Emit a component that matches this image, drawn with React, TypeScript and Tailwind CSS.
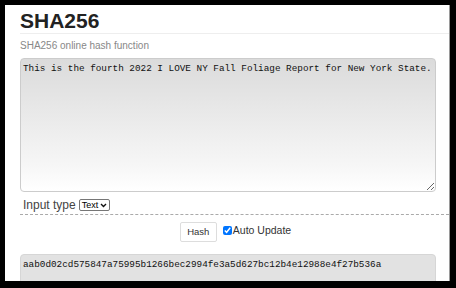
export default function App() {
  const input =
    "This is the fourth 2022 I LOVE NY Fall Foliage Report for New York State.";
  const hash =
    "aab0d02cd575847a75995b1266bec2994fe3a5d627bc12b4e12988e4f27b536a";

  return (
    <div className="w-[456px] h-[288px] bg-black pt-[5px] pl-[5px] pr-[6px] pb-[7px] font-['Liberation_Sans',Arial,sans-serif]">
      <div className="h-full bg-white border-r border-[#9a9a9a] overflow-hidden pl-[15px]">
        {/* Title */}
        <h1 className="mt-[4px] h-[25px] border-b border-[#eeeeee] text-[21px] leading-[24px] font-bold text-[#222]">
          SHA256
        </h1>
        <p className="mt-[6px] text-[10px] leading-[12px] text-[#888]">
          SHA256 online hash function
        </p>

        {/* Input */}
        <div className="mt-[6px] w-[416px] h-[134px] rounded-[4px] border border-[#cccccc] bg-[linear-gradient(to_bottom,#dbdbdb_0%,#f6f6f6_80%,#ffffff_100%)] overflow-hidden">
          <textarea
            readOnly
            value={input}
            className="block w-full h-full bg-transparent px-[2px] pt-[4px] font-['Liberation_Mono',monospace] text-[9.33px] leading-[12px] text-[#111] outline-none resize-y"
          />
        </div>

        <div className="mt-[7px] h-[12px] flex items-center pl-[3px] gap-[3px]">
          <span className="text-[12px] leading-[12px] text-[#444]">Input type</span>
          <div className="h-[12px] flex items-center gap-[2px] border border-[#767676] rounded-[2px] pl-[2px] pr-[2px]">
            <span className="text-[9px] leading-[10px] text-black">Text</span>
            <svg width="7" height="5" viewBox="0 0 7 5">
              <path d="M1 1 L3.5 3.5 L6 1" fill="none" stroke="#111" strokeWidth="1.4" />
            </svg>
          </div>
        </div>

        <div className="mt-[3px] border-t border-dashed border-[#aaaaaa]" />

        {/* Controls */}
        <div className="mt-[7px] flex items-center justify-center gap-[6px] pl-[2px]">
          <button className="w-[37px] h-[20px] border border-[#dddddd] rounded-[2px] bg-white text-[9.5px] text-[#333]">
            Hash
          </button>
          <label className="flex items-center gap-[1px] text-[10.5px] leading-[12px] text-[#333] -mt-[4px]">
            <input type="checkbox" defaultChecked className="w-[9px] h-[9px] m-0" />
            Auto Update
          </label>
        </div>

        {/* Output */}
        <div className="mt-[12px] w-[416px] h-[60px] rounded-[4px] border border-[#d6d6d6] bg-[#e2e2e2] px-[2px] pt-[4px] font-['Liberation_Mono',monospace] text-[9.33px] leading-[12px] text-[#111]">
          {hash}
        </div>
      </div>
    </div>
  );
}
